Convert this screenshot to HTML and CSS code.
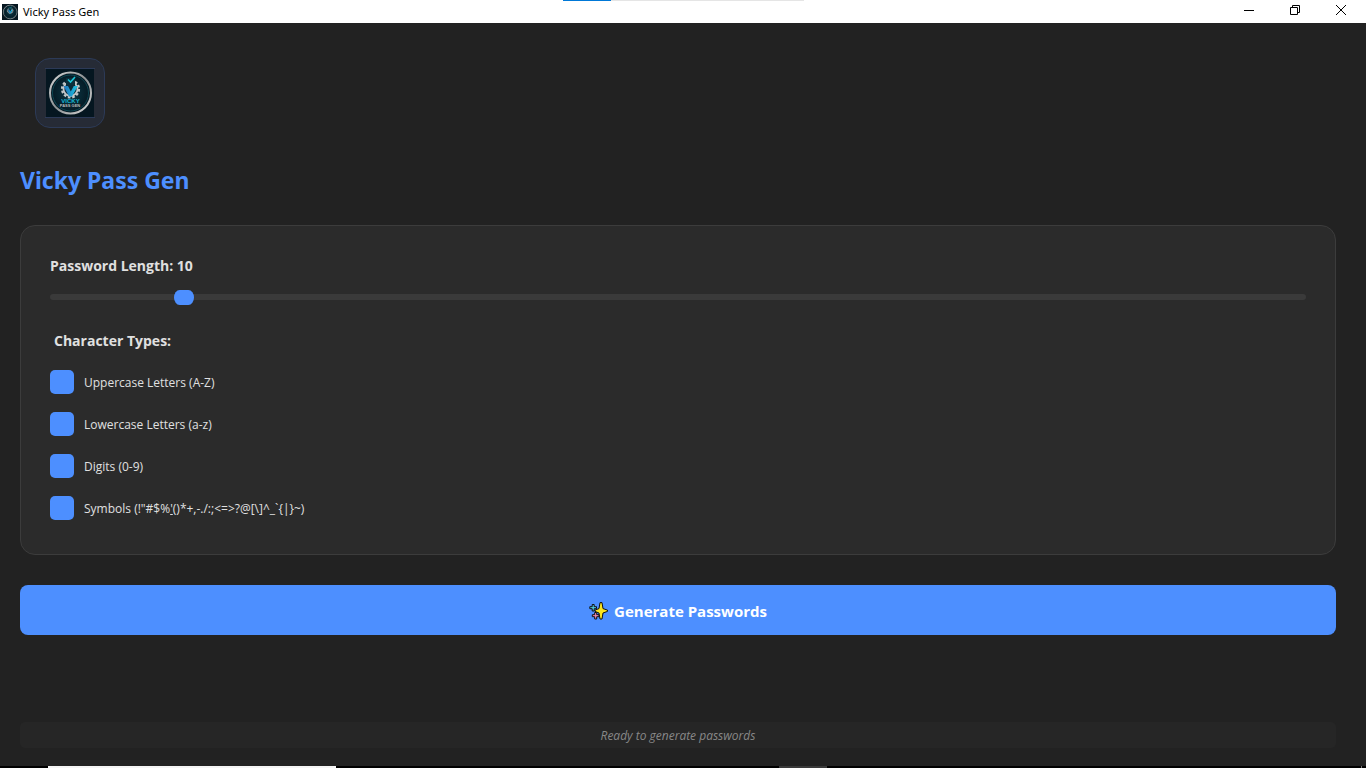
FILE: index.html
```html
<!DOCTYPE html>
<html lang="en">
<head>
<meta charset="utf-8">
<title>Vicky Pass Gen</title>
<link rel="stylesheet" href="styles.css">
</head>
<body>
<svg class="defs" width="0" height="0" aria-hidden="true">
  <defs>
    <radialGradient id="badge-bg"><stop offset="0" stop-color="#0b3a48"/><stop offset="1" stop-color="#051620"/></radialGradient>
    <linearGradient id="ring" x1="0" y1="0" x2="1" y2="1"><stop offset="0" stop-color="#d8d8d8"/><stop offset=".5" stop-color="#8b9092"/><stop offset="1" stop-color="#dadada"/></linearGradient>
    <linearGradient id="vee" x1="0" y1="0" x2="1" y2="0"><stop offset="0" stop-color="#2272b8"/><stop offset="1" stop-color="#19c5e6"/></linearGradient>
    <symbol id="logo" viewBox="0 0 48 48">
      <rect width="48" height="48" fill="#051620"/>
      <circle cx="24.500" cy="24" r="20.500" fill="url(#badge-bg)" stroke="url(#ring)" stroke-width="2"/>
      <circle cx="24.500" cy="24" r="18" fill="none" stroke="#0d4652" stroke-width="1"/>
      <circle cx="24.500" cy="20" r="8.500" fill="none" stroke="#c3c8ca" stroke-width="2.200" stroke-dasharray="2.600 1.850"/>
      <circle cx="24.500" cy="20" r="7" fill="#0a2a38" stroke="#c3c8ca" stroke-width="1.800"/>
      <path d="M20 9h9v7h-9z" fill="#0a2f3c"/>
      <path d="M17.500 17h4.500l2.800 5.500 3-5.500h4l-5.800 10.500h-3z" fill="url(#vee)"/>
      <path d="M22 10.500l2.500 2.500L29 8" fill="none" stroke="#17c9dc" stroke-width="1.600"/>
    </symbol>
  </defs>
</svg>
<header class="titlebar">
  <svg class="titlebar-icon" aria-hidden="true"><use href="#logo"/></svg>
  <span class="titlebar-name">Vicky Pass Gen</span>
  <div class="progress"><span class="progress-done"></span></div>
  <div class="window-controls">
    <button type="button" aria-label="Minimize"><svg width="10" height="10" viewBox="0 0 10 10"><path d="M0 5.500h10"/></svg></button>
    <button type="button" aria-label="Restore"><svg width="10" height="10" viewBox="0 0 10 10"><path d="M.5 2.500h7v7h-7zM2.500 2.500v-2h7v7h-2"/></svg></button>
    <button type="button" aria-label="Close"><svg class="close" width="10" height="10" viewBox="0 0 10 10"><path d="M0 0l10 10M10 0L0 10"/></svg></button>
  </div>
</header>
<main class="app">
  <div class="logo-tile">
    <svg class="logo" viewBox="0 0 48 48" role="img" aria-label="Vicky Pass Gen logo">
      <use href="#logo"/>
      <text class="logo-top" x="24.500" y="34" text-anchor="middle">VICKY</text>
      <text class="logo-bottom" x="24" y="38" text-anchor="middle">PASS GEN</text>
    </svg>
  </div>
  <h1>Vicky Pass Gen</h1>
  <form class="generator">
    <section class="panel">
      <label class="heading" for="length">Password Length: 10</label>
      <input class="slider" id="length" type="range" min="4" max="64" value="10">
      <fieldset>
        <legend class="heading">Character Types:</legend>
        <label class="option"><input type="checkbox" checked><span>Uppercase Letters (A-Z)</span></label>
        <label class="option"><input type="checkbox" checked><span>Lowercase Letters (a-z)</span></label>
        <label class="option"><input type="checkbox" checked><span>Digits (0-9)</span></label>
        <label class="option"><input type="checkbox" checked><span>Symbols (!"#$%<u>'</u>()*+,-./:;&lt;=&gt;?@[\]^_`{|}~)</span></label>
      </fieldset>
    </section>
    <button class="generate" type="button">
      <svg width="19" height="18" viewBox="0 0 19 18" aria-hidden="true">
        <g stroke="#101010" stroke-width="1" stroke-linejoin="round">
          <path d="M3.200 2.500h2v2.200h2.300v2H5.200V9h-2V6.700H.8v-2h2.400z" fill="#4fc8dc"/>
          <path d="M5.700 10.500h2v2.200H10v2H7.700V17h-2v-2.300H3.300v-2h2.400z" fill="#f58ab0"/>
          <path d="M11 .6h2l1 6 4.500 1.500v1.300L14 11l-1 6h-2l-1-6-4-1.600V8.100l4-1.500z" fill="#fbe51d"/>
        </g>
      </svg>
      <span>Generate Passwords</span>
    </button>
  </form>
  <p class="status" role="status">Ready to generate passwords</p>
</main>
<footer class="taskbar"><span class="task-active"></span><span class="task-open"></span><span class="task-edge"></span></footer>
</body>
</html>
```
FILE: styles.css
```css
* { box-sizing: border-box; }
body {
  margin: 0;
  min-height: 100vh;
  display: flex;
  flex-direction: column;
  background: #222222;
  color: #e0e0e0;
  font: 12px/16px "Open Sans", "Noto Sans", sans-serif;
}
.defs { position: absolute; }
button { border: 0; padding: 0; font: inherit; }

.titlebar {
  position: relative;
  display: flex;
  align-items: center;
  height: 23px;
  padding-left: 2px;
  background: #fff;
  color: #000;
}
.titlebar-icon { width: 16px; height: 16px; }
.titlebar-name { margin-left: 5px; font-family: "Noto Sans", sans-serif; font-size: 11px; }
.progress {
  position: absolute;
  top: 0;
  left: 50%;
  width: 241px;
  height: 1px;
  margin-left: -120px;
  background: #e5e5e5;
}
.progress-done { display: block; width: 20%; height: 1px; background: #0078d7; }
.window-controls { display: flex; margin-left: auto; padding-right: 2px; padding-bottom: 3px; }
.window-controls button {
  display: grid;
  place-items: center;
  width: 46px;
  height: 20px;
  background: transparent;
}
.window-controls path { fill: none; stroke: #000; }
.window-controls .close { overflow: visible; }

.app {
  flex: 1;
  display: flex;
  flex-direction: column;
  padding: 35px 30px 18px 20px;
}
.logo-tile {
  display: grid;
  place-items: center;
  width: 70px;
  height: 70px;
  margin-left: 15px;
  border: 1px solid #2c3a57;
  border-radius: 15px;
  background: #262b36;
}
.logo { width: 50px; height: 50px; border: 1px solid #2c3a57; border-width: 1px 0; padding: 0 1px; }
.logo text { font-family: "Liberation Sans", sans-serif; font-weight: 700; }
.logo-top { font-size: 6px; fill: #18b6d2; }
.logo-bottom { font-size: 4px; fill: #b8bcbe; }
h1 {
  margin: 36px 0 28px;
  color: #4d8fff;
  font: 700 23px/33px "Noto Sans", sans-serif;
}
.panel {
  display: flex;
  flex-direction: column;
  padding: 30px 29px;
  border: 1px solid #3c3c3c;
  border-radius: 15px;
  background: #2b2b2b;
}
.heading { font-size: 14px; line-height: 20px; font-weight: 700; }
.slider {
  appearance: none;
  width: 100%;
  height: 15px;
  margin: 13px 0 27px;
  background: transparent;
}
.slider::-webkit-slider-runnable-track { height: 6px; border-radius: 3px; background: #3a3a3a; }
.slider::-webkit-slider-thumb {
  appearance: none;
  width: 20px;
  height: 15px;
  margin-top: -4px;
  border-radius: 6px / 8px;
  background: #4d8fff;
}
fieldset {
  display: flex;
  flex-direction: column;
  gap: 18px;
  margin: 0;
  padding: 0;
  border: 0;
}
legend { padding: 0 4px; margin-bottom: 19px; }
.option { display: flex; align-items: center; gap: 10px; height: 24px; }
.option:last-child { margin-bottom: 4px; }
.option span { padding-top: 2px; }
.option input {
  appearance: none;
  width: 24px;
  height: 24px;
  margin: 0;
  border-radius: 5px;
  background: #4d8fff;
}
.generate {
  display: flex;
  align-items: center;
  justify-content: center;
  gap: 6px;
  width: 100%;
  height: 50px;
  margin-top: 30px;
  padding-top: 2px;
  border-radius: 8px;
  background: #4d8fff;
  color: #fff;
  font-size: 15px;
  font-weight: 700;
}
.status {
  margin: auto 0 0;
  padding: 6px 5px 4px;
  border-radius: 5px;
  background: #262626;
  color: #888;
  font-style: italic;
  text-align: center;
}
.taskbar { display: flex; height: 2px; padding: 0 4px 0 48px; background: #000; }
.taskbar span { height: 2px; }
.task-active { width: 288px; background: #f5f5f5; }
.task-open { width: 48px; margin-left: 443px; background: #3a3a3a; }
.task-edge { width: 1px; margin-left: auto; background: #777; }
```
